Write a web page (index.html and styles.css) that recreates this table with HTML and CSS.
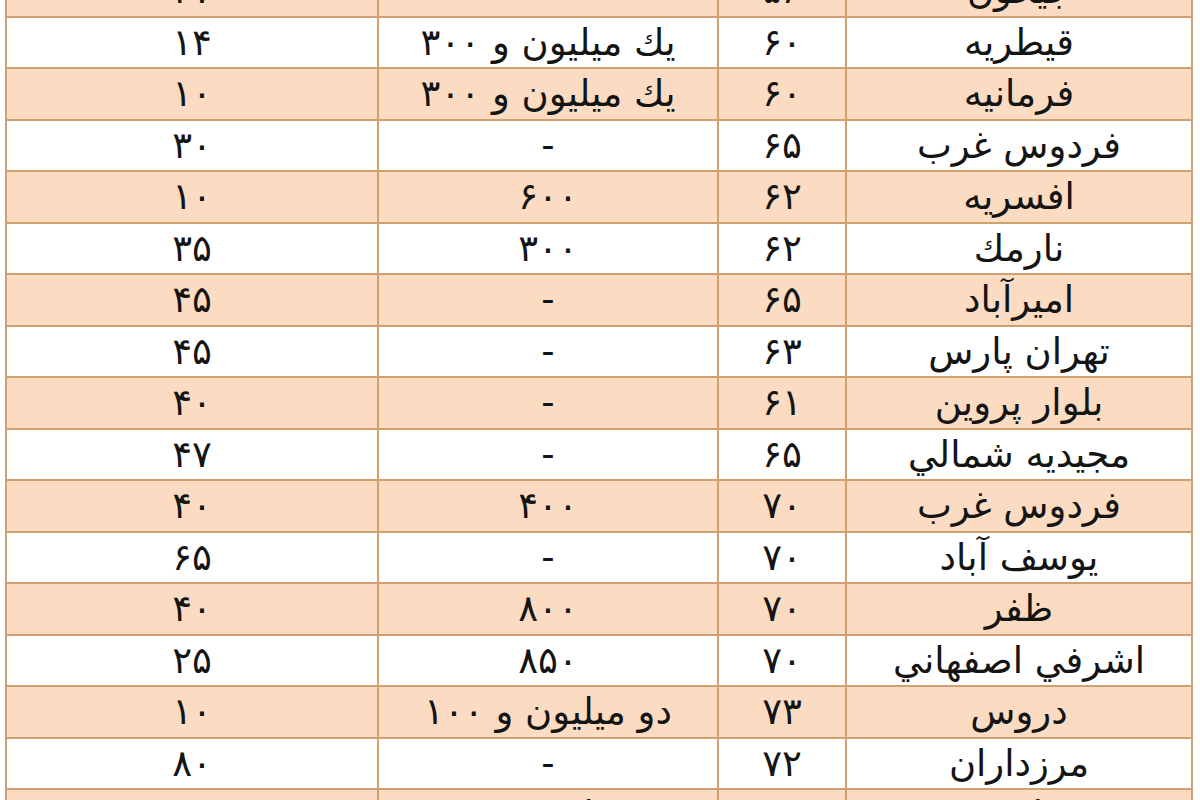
FILE: index.html
```html
<!DOCTYPE html>
<html lang="fa" dir="rtl">
<head>
<meta charset="utf-8">
<link rel="stylesheet" href="styles.css">
</head>
<body>
<div class="frame">
<table class="grid">
<colgroup>
<col class="c-name"><col class="c-area"><col class="c-price"><col class="c-age">
</colgroup>
<tbody>
<tr class="alt"><td>جيحون</td><td>۵۶</td><td>-</td><td>۴۷</td></tr>
<tr><td>قيطريه</td><td>۶۰</td><td>يك ميليون و ۳۰۰</td><td>۱۴</td></tr>
<tr class="alt"><td>فرمانيه</td><td>۶۰</td><td>يك ميليون و ۳۰۰</td><td>۱۰</td></tr>
<tr><td>فردوس غرب</td><td>۶۵</td><td>-</td><td>۳۰</td></tr>
<tr class="alt"><td>افسريه</td><td>۶۲</td><td>۶۰۰</td><td>۱۰</td></tr>
<tr><td>نارمك</td><td>۶۲</td><td>۳۰۰</td><td>۳۵</td></tr>
<tr class="alt"><td>اميرآباد</td><td>۶۵</td><td>-</td><td>۴۵</td></tr>
<tr><td>تهران پارس</td><td>۶۳</td><td>-</td><td>۴۵</td></tr>
<tr class="alt"><td>بلوار پروين</td><td>۶۱</td><td>-</td><td>۴۰</td></tr>
<tr><td>مجيديه شمالي</td><td>۶۵</td><td>-</td><td>۴۷</td></tr>
<tr class="alt"><td>فردوس غرب</td><td>۷۰</td><td>۴۰۰</td><td>۴۰</td></tr>
<tr><td>يوسف آباد</td><td>۷۰</td><td>-</td><td>۶۵</td></tr>
<tr class="alt"><td>ظفر</td><td>۷۰</td><td>۸۰۰</td><td>۴۰</td></tr>
<tr><td>اشرفي اصفهاني</td><td>۷۰</td><td>۸۵۰</td><td>۲۵</td></tr>
<tr class="alt"><td>دروس</td><td>۷۳</td><td>دو ميليون و ۱۰۰</td><td>۱۰</td></tr>
<tr><td>مرزداران</td><td>۷۲</td><td>-</td><td>۸۰</td></tr>
<tr class="alt"><td>شهرك غرب</td><td>۷۵</td><td>دو ميليون و ۵۰۰</td><td>۱۵</td></tr>
</tbody>
</table>
</div>
</body>
</html>
```
FILE: styles.css
```css
html, body {
  margin: 0;
  padding: 0;
  background: #ffffff;
}
.frame {
  width: 1200px;
  height: 800px;
  overflow: hidden;
  background: #ffffff;
}
.grid {
  margin: -36px 7px 0 0;
  width: 1186px;
  border-collapse: collapse;
  table-layout: fixed;
  font-family: "DejaVu Sans", sans-serif;
  font-size: 37px;
  color: #141414;
}
.c-name { width: 346px; }
.c-area { width: 128px; }
.c-price { width: 340px; }
.c-age { width: 372px; }
.grid td {
  height: 49.5px;
  padding: 0;
  text-align: center;
  vertical-align: middle;
  border: 2px solid #cfa171;
  line-height: 1;
  white-space: nowrap;
  overflow: hidden;
}
.grid tr { background: #ffffff; }
.grid tr.alt { background: #fbdcc3; }
```
